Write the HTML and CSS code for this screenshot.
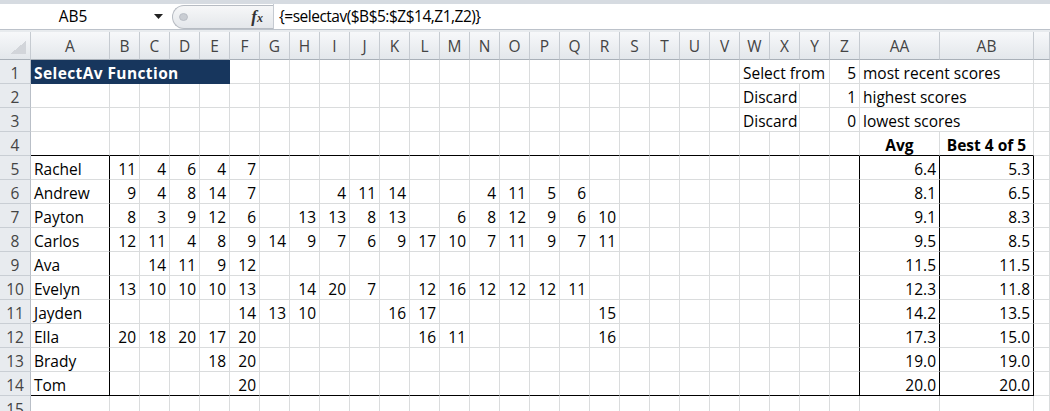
FILE: index.html
```html
<!DOCTYPE html>
<html>
<head>
<meta charset="utf-8">
<title>SelectAv Function</title>
<link rel="stylesheet" href="styles.css">
</head>
<body>
<div class="fbar">
  <div class="namebox">
    <span class="namebox-text">AB5</span>
    <span class="namebox-arrow"><svg width="9" height="5" viewBox="0 0 9 5"><path d="M0 0H9L4.5 5Z" fill="#222"/></svg></span>
  </div>
  <div class="fbtns">
    <svg class="grip" width="9" height="8" viewBox="0 0 9 8"><ellipse cx="4.5" cy="4" rx="4" ry="3.5" fill="#c9cdd3" stroke="#b3b8bf" stroke-width="0.8"/></svg>
    <span class="fx">f<small>x</small></span>
  </div>
  <div class="formula">{=selectav($B$5:$Z$14,Z1,Z2)}</div>
</div>
<div class="fbar-gap"></div>
<table class="sheet">
  <colgroup>
    <col class="c-rh"><col class="c-a">
    <col class="c-n"><col class="c-n"><col class="c-n"><col class="c-n"><col class="c-n">
    <col class="c-n"><col class="c-n"><col class="c-n"><col class="c-n"><col class="c-n">
    <col class="c-n"><col class="c-n"><col class="c-n"><col class="c-n"><col class="c-n">
    <col class="c-n"><col class="c-n"><col class="c-n"><col class="c-n"><col class="c-n">
    <col class="c-n"><col class="c-n"><col class="c-n"><col class="c-n"><col class="c-n">
    <col class="c-aa"><col class="c-ab"><col class="c-ac">
  </colgroup>
  <thead>
    <tr><th class="corner"></th><th>A</th><th>B</th><th>C</th><th>D</th><th>E</th><th>F</th><th>G</th><th>H</th><th>I</th><th>J</th><th>K</th><th>L</th><th>M</th><th>N</th><th>O</th><th>P</th><th>Q</th><th>R</th><th>S</th><th>T</th><th>U</th><th>V</th><th>W</th><th>X</th><th>Y</th><th>Z</th><th>AA</th><th>AB</th><th></th></tr>
  </thead>
  <tbody>
    <tr><th>1</th><td colspan="5" class="t title">SelectAv Function</td><td></td><td></td><td></td><td></td><td></td><td></td><td></td><td></td><td></td><td></td><td></td><td></td><td></td><td></td><td></td><td></td><td></td><td colspan="3" class="t">Select from</td><td>5</td><td colspan="2" class="t">most recent scores</td><td></td></tr>
    <tr><th>2</th><td></td><td></td><td></td><td></td><td></td><td></td><td></td><td></td><td></td><td></td><td></td><td></td><td></td><td></td><td></td><td></td><td></td><td></td><td></td><td></td><td></td><td></td><td colspan="2" class="t">Discard</td><td></td><td>1</td><td colspan="2" class="t">highest scores</td><td></td></tr>
    <tr><th>3</th><td></td><td></td><td></td><td></td><td></td><td></td><td></td><td></td><td></td><td></td><td></td><td></td><td></td><td></td><td></td><td></td><td></td><td></td><td></td><td></td><td></td><td></td><td colspan="2" class="t">Discard</td><td></td><td>0</td><td colspan="2" class="t">lowest scores</td><td></td></tr>
    <tr class="above"><th>4</th><td></td><td></td><td></td><td></td><td></td><td></td><td></td><td></td><td></td><td></td><td></td><td></td><td></td><td></td><td></td><td></td><td></td><td></td><td></td><td></td><td></td><td></td><td></td><td></td><td></td><td></td><td class="h">Avg</td><td class="h">Best 4 of 5</td><td></td></tr>
    <tr><th>5</th><td class="t br">Rachel</td><td>11</td><td>4</td><td>6</td><td>4</td><td>7</td><td></td><td></td><td></td><td></td><td></td><td></td><td></td><td></td><td></td><td></td><td></td><td></td><td></td><td></td><td></td><td></td><td></td><td></td><td></td><td class="br"></td><td class="br">6.4</td><td class="br">5.3</td><td></td></tr>
    <tr><th>6</th><td class="t br">Andrew</td><td>9</td><td>4</td><td>8</td><td>14</td><td>7</td><td></td><td></td><td>4</td><td>11</td><td>14</td><td></td><td></td><td>4</td><td>11</td><td>5</td><td>6</td><td></td><td></td><td></td><td></td><td></td><td></td><td></td><td></td><td class="br"></td><td class="br">8.1</td><td class="br">6.5</td><td></td></tr>
    <tr><th>7</th><td class="t br">Payton</td><td>8</td><td>3</td><td>9</td><td>12</td><td>6</td><td></td><td>13</td><td>13</td><td>8</td><td>13</td><td></td><td>6</td><td>8</td><td>12</td><td>9</td><td>6</td><td>10</td><td></td><td></td><td></td><td></td><td></td><td></td><td></td><td class="br"></td><td class="br">9.1</td><td class="br">8.3</td><td></td></tr>
    <tr><th>8</th><td class="t br">Carlos</td><td>12</td><td>11</td><td>4</td><td>8</td><td>9</td><td>14</td><td>9</td><td>7</td><td>6</td><td>9</td><td>17</td><td>10</td><td>7</td><td>11</td><td>9</td><td>7</td><td>11</td><td></td><td></td><td></td><td></td><td></td><td></td><td></td><td class="br"></td><td class="br">9.5</td><td class="br">8.5</td><td></td></tr>
    <tr><th>9</th><td class="t br">Ava</td><td></td><td>14</td><td>11</td><td>9</td><td>12</td><td></td><td></td><td></td><td></td><td></td><td></td><td></td><td></td><td></td><td></td><td></td><td></td><td></td><td></td><td></td><td></td><td></td><td></td><td></td><td class="br"></td><td class="br">11.5</td><td class="br">11.5</td><td></td></tr>
    <tr><th>10</th><td class="t br">Evelyn</td><td>13</td><td>10</td><td>10</td><td>10</td><td>13</td><td></td><td>14</td><td>20</td><td>7</td><td></td><td>12</td><td>16</td><td>12</td><td>12</td><td>12</td><td>11</td><td></td><td></td><td></td><td></td><td></td><td></td><td></td><td></td><td class="br"></td><td class="br">12.3</td><td class="br">11.8</td><td></td></tr>
    <tr><th>11</th><td class="t br">Jayden</td><td></td><td></td><td></td><td></td><td>14</td><td>13</td><td>10</td><td></td><td></td><td>16</td><td>17</td><td></td><td></td><td></td><td></td><td></td><td>15</td><td></td><td></td><td></td><td></td><td></td><td></td><td></td><td class="br"></td><td class="br">14.2</td><td class="br">13.5</td><td></td></tr>
    <tr><th>12</th><td class="t br">Ella</td><td>20</td><td>18</td><td>20</td><td>17</td><td>20</td><td></td><td></td><td></td><td></td><td></td><td>16</td><td>11</td><td></td><td></td><td></td><td></td><td>16</td><td></td><td></td><td></td><td></td><td></td><td></td><td></td><td class="br"></td><td class="br">17.3</td><td class="br">15.0</td><td></td></tr>
    <tr><th>13</th><td class="t br">Brady</td><td></td><td></td><td></td><td>18</td><td>20</td><td></td><td></td><td></td><td></td><td></td><td></td><td></td><td></td><td></td><td></td><td></td><td></td><td></td><td></td><td></td><td></td><td></td><td></td><td></td><td class="br"></td><td class="br">19.0</td><td class="br">19.0</td><td></td></tr>
    <tr class="last"><th>14</th><td class="t br">Tom</td><td></td><td></td><td></td><td></td><td>20</td><td></td><td></td><td></td><td></td><td></td><td></td><td></td><td></td><td></td><td></td><td></td><td></td><td></td><td></td><td></td><td></td><td></td><td></td><td></td><td class="br"></td><td class="br">20.0</td><td class="br">20.0</td><td></td></tr>
    <tr><th>15</th><td></td><td></td><td></td><td></td><td></td><td></td><td></td><td></td><td></td><td></td><td></td><td></td><td></td><td></td><td></td><td></td><td></td><td></td><td></td><td></td><td></td><td></td><td></td><td></td><td></td><td></td><td></td><td></td><td></td></tr>
  </tbody>
</table>
</body>
</html>
```

FILE: styles.css
```css
* { box-sizing: border-box; }
html, body { margin: 0; padding: 0; }
body {
  width: 1050px;
  height: 411px;
  overflow: hidden;
  background: #fff;
  font-family: "Open Sans", "Liberation Sans", sans-serif;
  font-size: 15.5px;
  color: #000;
}

/* formula bar */
.fbar {
  display: flex;
  height: 30px;
  border-top: 4px solid #d6dbe1;
  border-bottom: 1px solid #bcc2ca;
  background: #fff;
}
.fbar-gap { height: 2px; background: #e8ebee; }
.namebox {
  width: 172px;
  display: flex;
  align-items: center;
  line-height: 25px;
}
.namebox-text { flex: 1; text-align: center; padding-left: 2px; }
.namebox-arrow { width: 28px; display: flex; justify-content: center; padding-bottom: 1px; }
.fbtns {
  width: 101px;
  display: flex;
  align-items: center;
  justify-content: space-between;
  margin-top: 1px;
  border: 1px solid #b7bcc3;
  border-right: none;
  border-radius: 12px 0 0 12px;
  background: linear-gradient(#f6f7f8, #e4e7eb);
  padding: 0 10px 0 6px;
}
.fx {
  font-family: "Liberation Serif", serif;
  font-style: italic;
  font-weight: bold;
  font-size: 17px;
  color: #333;
  line-height: 20px;
}
.fx small { font-size: 12px; }
.formula {
  flex: 1;
  border-left: 1px solid #c5cad1;
  padding-left: 5px;
  line-height: 25px;
  letter-spacing: -0.5px;
  white-space: nowrap;
}

/* sheet */
.sheet {
  border-collapse: separate;
  border-spacing: 0;
  table-layout: fixed;
  width: 1050px;
}
.c-rh { width: 31px; }
.c-a { width: 79px; }
.c-n { width: 30px; }
.c-aa { width: 80px; }
.c-ab { width: 94px; }
.c-ac { width: 16px; }

.sheet th, .sheet td {
  height: 24px;
  padding: 0 3px;
  border-right: 1px solid #dadcdd;
  border-bottom: 1px solid #dadcdd;
  white-space: nowrap;
  overflow: hidden;
  line-height: 20px;
  vertical-align: bottom;
  text-align: right;
  font-weight: normal;
}
.sheet thead th {
  height: 28px;
  padding: 0;
  background: linear-gradient(#f7f8fa, #e3e7eb);
  border-right-color: #c6cbd1;
  border-bottom-color: #a9b0b8;
  color: #444;
  text-align: center;
  vertical-align: middle;
}
.sheet thead th.corner {
  background:
    linear-gradient(to bottom right, transparent 50%, #d2d5da 50%) right 4px bottom 5px / 16px 13px no-repeat,
    linear-gradient(#f7f8fa, #e3e7eb);
}
.sheet tbody th {
  padding: 0;
  background: #e8ebef;
  border-right-color: #b9bfc7;
  border-bottom-color: #c9ced4;
  color: #444;
  text-align: center;
}

.sheet td.t { text-align: left; }
.sheet td.title {
  background: #17365d;
  color: #fff;
  font-weight: bold;
  letter-spacing: 0.4px;
  border-right-color: #17365d;
  border-bottom-color: #17365d;
}
.sheet td.h { font-weight: bold; text-align: center; }
.sheet td.br { border-right-color: #000; }
.sheet tr.above td:not(:last-child),
.sheet tr.last td:not(:last-child) { border-bottom-color: #000; }
```
